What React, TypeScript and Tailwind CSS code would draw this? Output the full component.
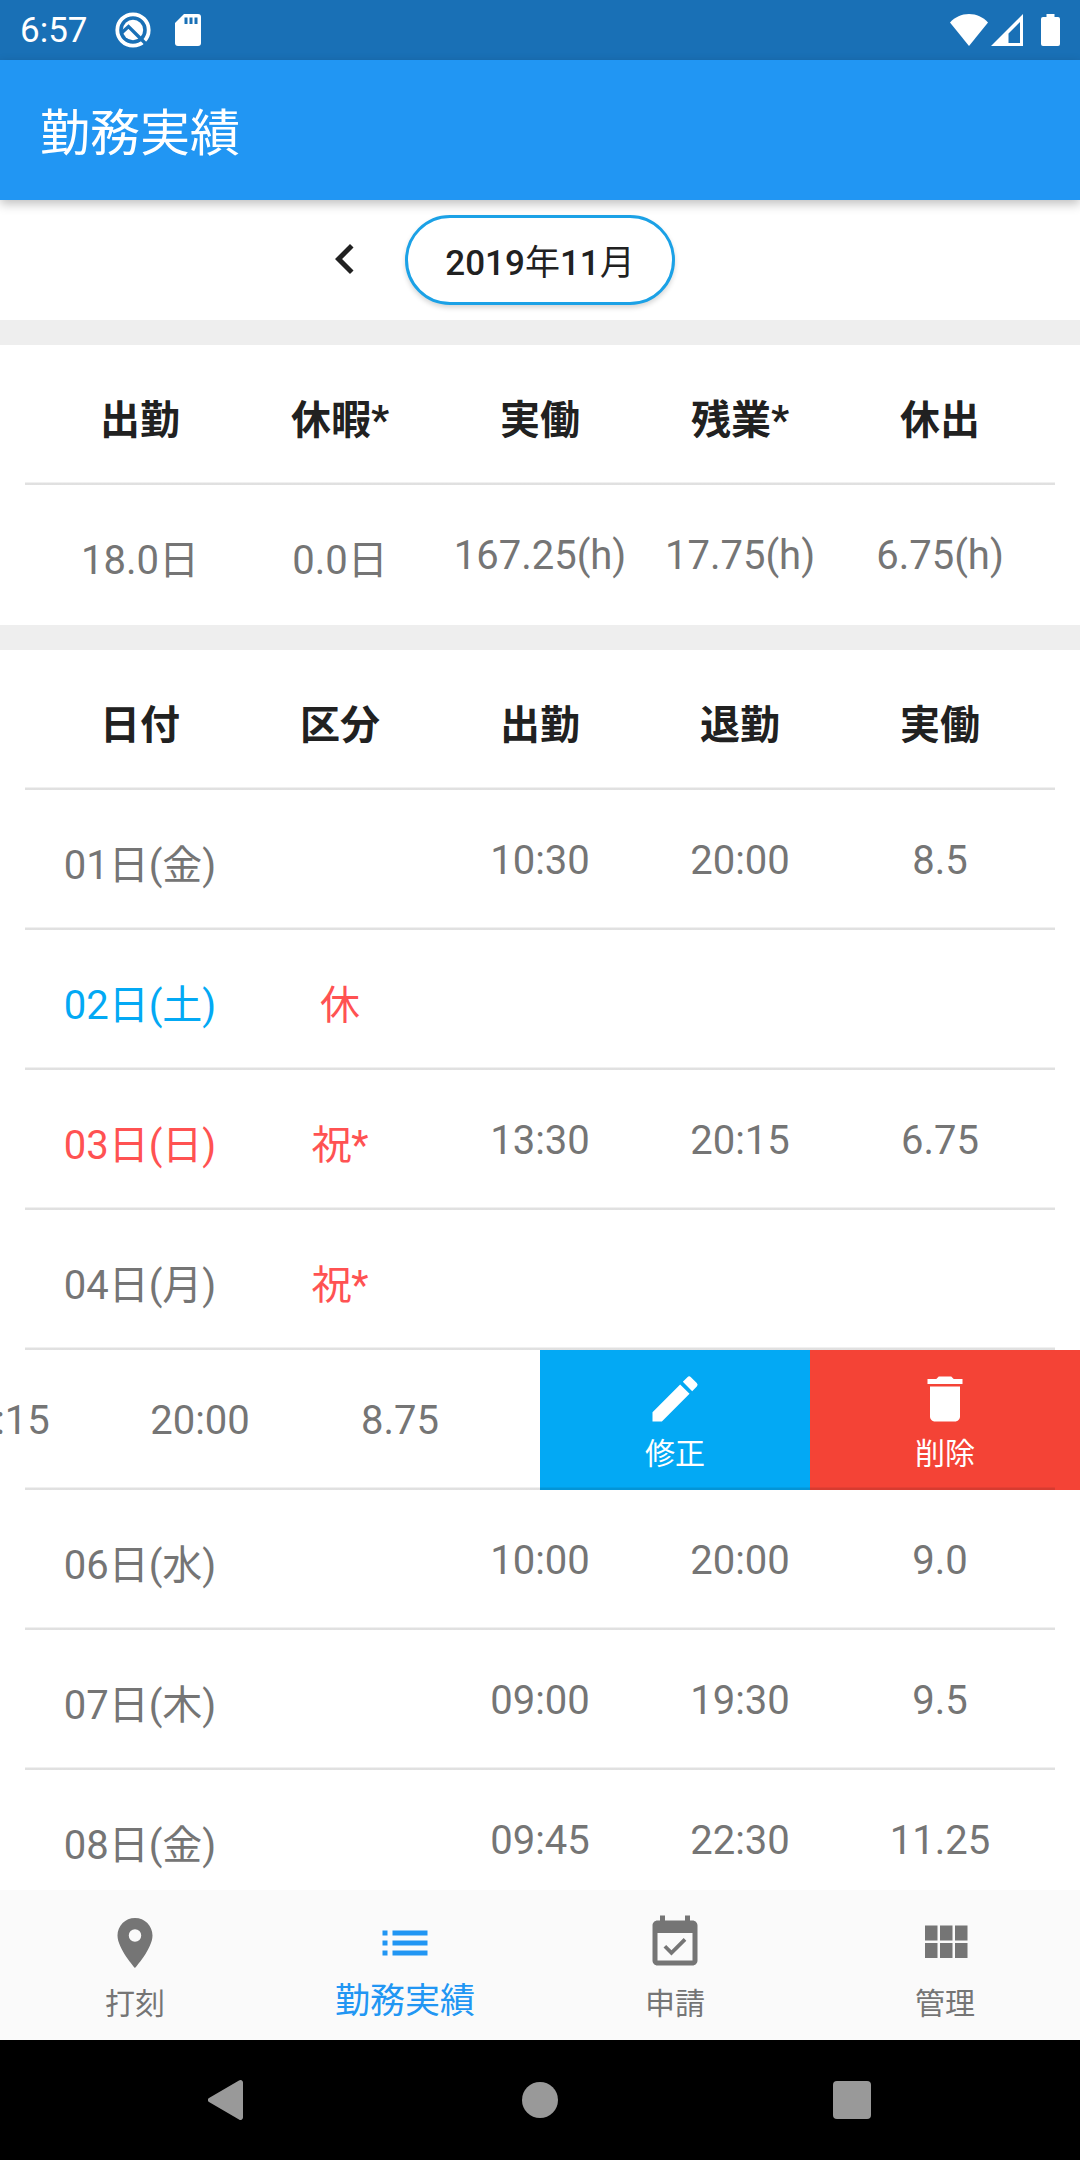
import type { ReactNode } from 'react'

type Day = {
  date: string
  kind?: string
  start?: string
  end?: string
  hours?: string
  color?: string
  swiped?: boolean
}

const summaryHead = ['出勤', '休暇*', '実働', '残業*', '休出']
const summary = ['18.0日', '0.0日', '167.25(h)', '17.75(h)', '6.75(h)']
const dayHead = ['日付', '区分', '出勤', '退勤', '実働']

const days: Day[] = [
  { date: '01日(金)', start: '10:30', end: '20:00', hours: '8.5' },
  { date: '02日(土)', kind: '休', color: 'text-[#03a9f4]' },
  { date: '03日(日)', kind: '祝*', start: '13:30', end: '20:15', hours: '6.75', color: 'text-[#ff5252]' },
  { date: '04日(月)', kind: '祝*' },
  { date: '05日(火)', start: '10:15', end: '20:00', hours: '8.75', swiped: true },
  { date: '06日(水)', start: '10:00', end: '20:00', hours: '9.0' },
  { date: '07日(木)', start: '09:00', end: '19:30', hours: '9.5' },
  { date: '08日(金)', start: '09:45', end: '22:30', hours: '11.25' },
]

const icons = {
  left: 'M15.41 7.41L14 6l-6 6 6 6 1.41-1.41L10.83 12z',
  edit: 'M3 17.25V21h3.75L17.81 9.94l-3.75-3.75L3 17.25zM20.71 7.04a.996.996 0 0 0 0-1.41l-2.34-2.34a.996.996 0 0 0-1.41 0l-1.83 1.83 3.75 3.75 1.83-1.83z',
  remove: 'M6 19c0 1.1.9 2 2 2h8c1.1 0 2-.9 2-2V7H6v12zM19 4h-3.5l-1-1h-5l-1 1H5v2h14V4z',
  place: 'M12 2C8.13 2 5 5.13 5 9c0 5.25 7 13 7 13s7-7.75 7-13c0-3.87-3.13-7-7-7zm0 9.5a2.5 2.5 0 0 1 0-5 2.5 2.5 0 0 1 0 5z',
  list: 'M3 13h2v-2H3v2zm0 4h2v-2H3v2zm0-8h2V7H3v2zm4 4h14v-2H7v2zm0 4h14v-2H7v2zM7 7v2h14V7H7z',
  event: 'M16.53 11.06L15.47 10l-4.88 4.88-2.12-2.12-1.06 1.06L10.59 17l5.94-5.94zM19 3h-1V1h-2v2H8V1H6v2H5c-1.11 0-1.99.9-1.99 2L3 19c0 1.1.89 2 2 2h14c1.1 0 2-.9 2-2V5c0-1.1-.9-2-2-2zm0 16H5V8h14v11z',
  module: 'M4 11h5V5H4v6zm0 7h5v-6H4v6zm6 0h5v-6h-5v6zm6 0h5v-6h-5v6zm-6-7h5V5h-5v6zm6-6v6h5V5h-5z',
}

const tabs = [
  { label: '打刻', icon: icons.place },
  { label: '勤務実績', icon: icons.list, active: true },
  { label: '申請', icon: icons.event },
  { label: '管理', icon: icons.module },
]

function Icon({ d }: { d: string }) {
  return (
    <svg viewBox="0 0 24 24" className="w-[60px] h-[60px] shrink-0 fill-current">
      <path d={d} />
    </svg>
  )
}

const hasKanji = (s: string) => /[\u4e00-\u9fff]/.test(s)

function Cell({ text = '', className = '' }: { text?: string; className?: string }) {
  return (
    <div className={`w-[200px] text-center whitespace-nowrap ${hasKanji(text) ? 'pt-[12px]' : 'pt-[2px]'} ${className}`}>{text}</div>
  )
}

function Row({ children, last, swiped }: { children: ReactNode; last?: boolean; swiped?: boolean }) {
  return (
    <div className="relative h-[140px] shrink-0 overflow-hidden">
      <div className={`h-full px-[40px] flex items-center text-[40px] leading-[48px] text-[#757575] ${swiped ? '-translate-x-1/2' : ''}`}>
        {children}
      </div>
      {swiped && (
        <div className="absolute inset-y-0 right-0 w-1/2 flex text-white text-[30px] leading-[36px]">
          <button className="flex-1 bg-[#03a9f4] flex flex-col items-center pt-[19px]">
            <Icon d={icons.edit} />
            <span className="mt-[7px]">修正</span>
          </button>
          <button className="flex-1 bg-[#f44336] flex flex-col items-center pt-[19px]">
            <Icon d={icons.remove} />
            <span className="mt-[7px]">削除</span>
          </button>
        </div>
      )}
      {!last && <div className="absolute bottom-0 inset-x-[25px] h-[3px] bg-linear-to-b from-black/6 from-33% to-black/12 to-34%" />}
    </div>
  )
}

function HeadRow({ labels }: { labels: string[] }) {
  return (
    <Row>
      {labels.map(l => (
        <Cell key={l} text={l} className="font-bold text-[#212121]" />
      ))}
    </Row>
  )
}

function StatusBar() {
  return (
    <div className="h-[60px] shrink-0 bg-[#1970b6] text-white flex items-center pl-[20px] pr-[20px]">
      <span className="text-[35px] leading-[60px] w-[95px] pt-[2px]">6:57</span>
      <svg viewBox="0 0 36 36" className="w-[36px] h-[36px]">
        <circle cx="18" cy="18" r="15.7" fill="none" stroke="#fff" strokeWidth="3.8" />
        <circle cx="18" cy="18" r="10.2" fill="#fff" />
        <path d="M7 20.500l6.500-6L30.500 31.500" fill="none" stroke="#1970b6" strokeWidth="3.400" />
      </svg>
      <svg viewBox="0 0 26 32" className="w-[26px] h-[32px] ml-[24px]">
        <path d="M9 0h14a3 3 0 0 1 3 3v26a3 3 0 0 1-3 3H3a3 3 0 0 1-3-3V9z" fill="#fff" />
        <path d="M9.500 3.500h3v6.500h-3zM14.500 3.500h3v6.500h-3zM19.500 3.500h3v6.500h-3z" fill="#1970b6" />
      </svg>
      <div className="flex-1" />
      <svg viewBox="0 0 38 32" className="w-[38px] h-[32px]">
        <path d="M19 32L0 8.500C5 3 11.500 0 19 0s14 3 19 8.500z" fill="#fff" />
      </svg>
      <svg viewBox="0 0 32 32" className="w-[32px] h-[32px] ml-[3px]">
        <path d="M32 0v32H0zM29 8L17.500 19.500V29H29z" fill="#fff" fillRule="evenodd" />
      </svg>
      <svg viewBox="0 0 19 32" className="w-[19px] h-[32px] ml-[18px]">
        <path d="M5.500 0h8v3H17a2 2 0 0 1 2 2v25a2 2 0 0 1-2 2H2a2 2 0 0 1-2-2V5a2 2 0 0 1 2-2h3.500z" fill="#fff" />
      </svg>
    </div>
  )
}

export default function App() {
  return (
    <div className="w-[1080px] h-[2160px] flex flex-col bg-white overflow-hidden font-[Roboto,'Noto_Sans_CJK_JP',sans-serif]">
      <StatusBar />
      <header className="relative z-10 h-[140px] shrink-0 bg-[#2196f3] px-[40px] flex items-center shadow-[0_4px_10px_rgba(0,0,0,0.25)]">
        <h1 className="text-white text-[50px] leading-[60px] pt-[8px]">勤務実績</h1>
      </header>

      <main className="flex-1 min-h-0 overflow-hidden flex flex-col">
        {/* Month picker */}
        <div className="h-[120px] shrink-0 flex items-center justify-center text-[#212121]">
          <button className="w-[120px] flex justify-center pb-[2px]"><Icon d={icons.left} /></button>
          <button className="w-[270px] h-[90px] rounded-full border-[3px] border-[#1ba1e6] bg-white text-[35px] leading-[42px] font-medium pt-[7px] shadow-[0_3px_5px_rgba(0,0,0,0.16)]">
            2019<span className="font-normal">年</span>11<span className="font-normal">月</span>
          </button>
          <div className="w-[120px]" />
        </div>

        <div className="h-[25px] shrink-0 bg-[#eeeeee]" />
        <HeadRow labels={summaryHead} />
        <Row last>
          {summary.map(s => <Cell key={s} text={s} />)}
        </Row>

        <div className="h-[25px] shrink-0 bg-[#eeeeee]" />
        <HeadRow labels={dayHead} />
        {days.map(d => (
          <Row key={d.date} swiped={d.swiped}>
            <Cell text={d.date} className={d.color} />
            <Cell text={d.kind} className="text-[#ff5252]" />
            <Cell text={d.start} />
            <Cell text={d.end} />
            <Cell text={d.hours} />
          </Row>
        ))}
      </main>

      {/* Bottom tabs */}
      <nav className="h-[150px] shrink-0 bg-[#fafafa] flex">
        {tabs.map(t => (
          <button key={t.label} className={`flex-1 flex flex-col items-center pt-[22.5px] ${t.active ? 'text-[#2196f3]' : 'text-[#757575]'}`}>
            <Icon d={t.icon} />
            <span className={t.active ? 'text-[35px] leading-[42px] mt-[8.5px]' : 'text-[30px] leading-[36px] mt-[13.5px]'}>{t.label}</span>
          </button>
        ))}
      </nav>

      {/* System navigation */}
      <div className="h-[120px] shrink-0 bg-black flex items-center pl-[208px]">
        <svg viewBox="0 0 35 40" className="w-[35px] h-[40px]">
          <path d="M1 18L31 .6a2.500 2.500 0 0 1 4 2v34.800a2.500 2.500 0 0 1-4 2L1 22a2.400 2.400 0 0 1 0-4z" fill="#999" />
        </svg>
        <div className="w-[36px] h-[36px] ml-[279px] rounded-full bg-[#999]" />
        <div className="w-[38px] h-[38px] ml-[275px] rounded-[4px] bg-[#999]" />
      </div>
    </div>
  )
}
